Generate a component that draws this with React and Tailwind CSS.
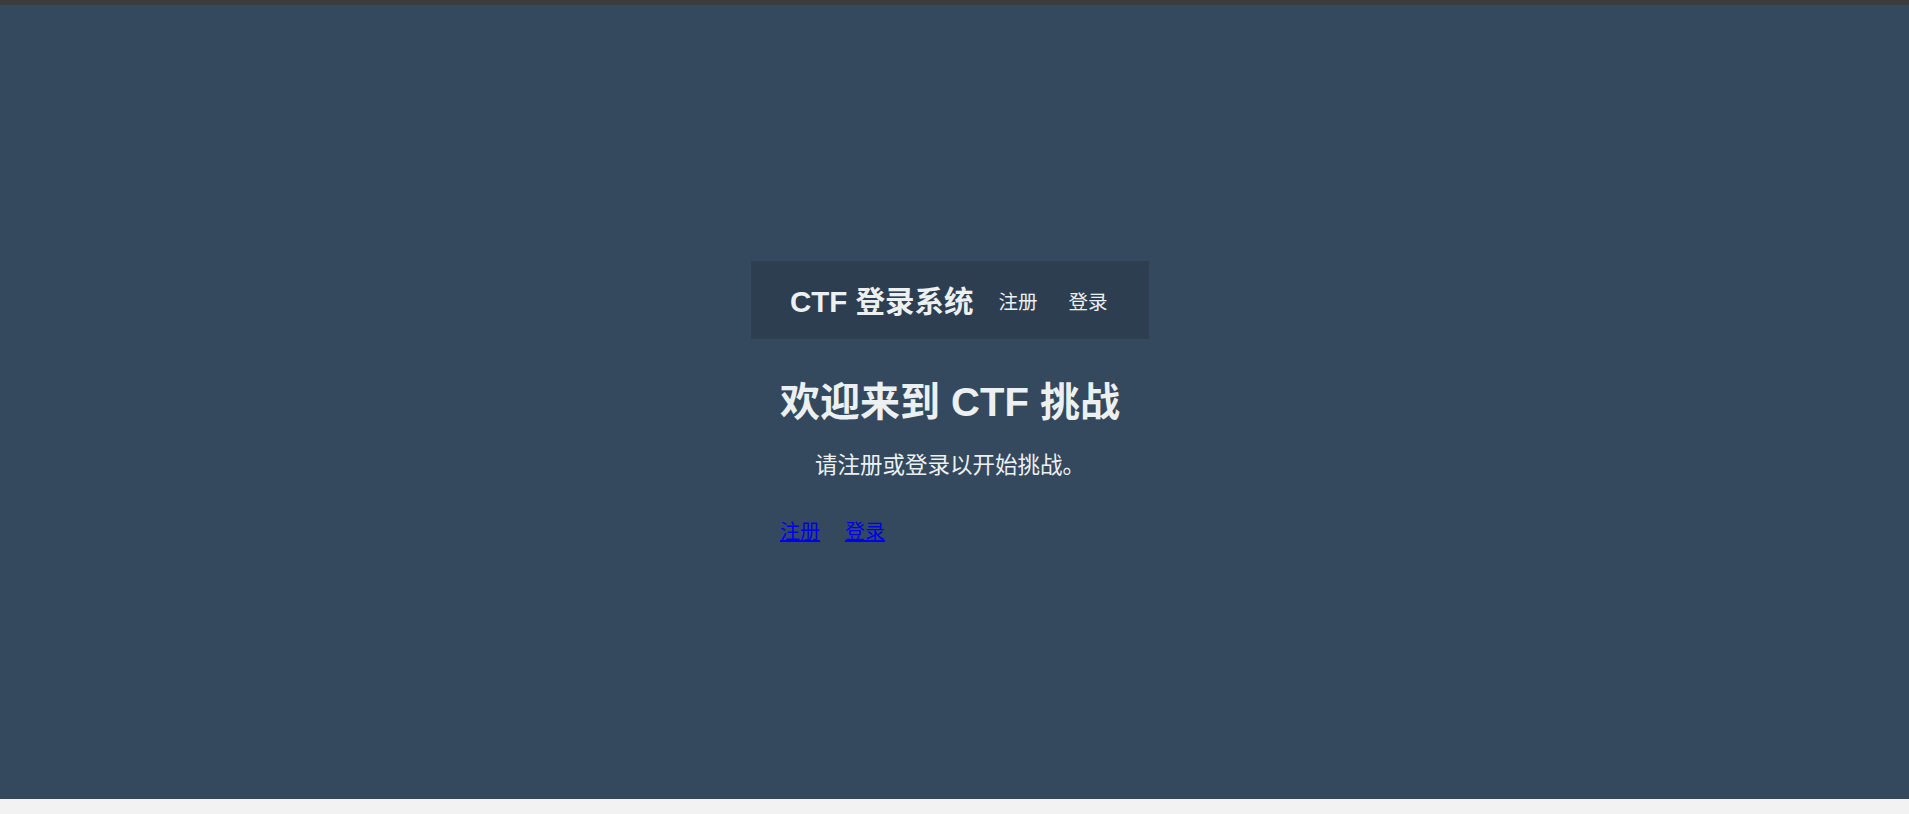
import React from "react";

// Top navigation box
const NavBar = () => {
  return (
    <nav className="flex items-center h-[78px] w-full px-[39px] pt-[4px] bg-[#2c3e50] text-[#ecf0f1] whitespace-nowrap">
      <span className="shrink-0 text-[29.5px] font-bold leading-[36px]">CTF 登录系统</span>
      <a className="shrink-0 ml-[25px] text-[19.5px] leading-[24px] text-[#ecf0f1] no-underline" href="#">
        注册
      </a>
      <a className="shrink-0 ml-[31px] text-[19.5px] leading-[24px] text-[#ecf0f1] no-underline" href="#">
        登录
      </a>
    </nav>
  );
};

const App = () => {
  return (
    <div
      className="flex flex-col min-h-screen"
      style={{ fontFamily: '"Liberation Sans", "Noto Sans CJK SC", sans-serif' }}
    >
      <div className="h-[5px] bg-[#3c3c3c]"></div>
      <main className="h-[794px] bg-[#34495e] flex items-center justify-center">
        <div className="flex flex-col w-[398px] mr-[9px]">
          <NavBar />
          <h1 className="mt-[39px] text-center text-[40px] font-bold leading-[48px] text-[#ecf0f1] whitespace-nowrap">
            欢迎来到 CTF 挑战
          </h1>
          <p className="mt-[27px] text-center text-[22.5px] leading-[26px] text-[#ecf0f1] whitespace-nowrap">
            请注册或登录以开始挑战。
          </p>
          <div className="mt-[41px] pl-[29px] flex gap-[25px] text-[20px] leading-[24px]">
            <a className="text-[#0000ee] underline" href="#">注册</a>
            <a className="text-[#0000ee] underline" href="#">登录</a>
          </div>
        </div>
      </main>
      <div className="h-[15px] bg-[#f2f2f2]"></div>
    </div>
  );
};

export default App;
